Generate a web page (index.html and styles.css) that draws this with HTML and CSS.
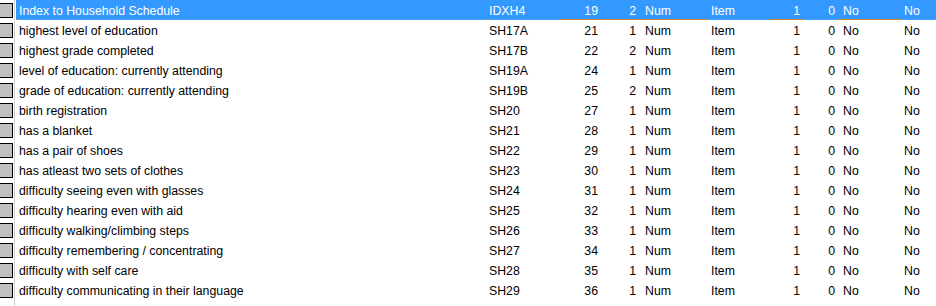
FILE: index.html
```html
<!DOCTYPE html>
<html>
<head>
<meta charset="utf-8">
<link rel="stylesheet" href="styles.css">
</head>
<body>
<div class="list">
  <div class="row sel"><div class="gut"><span class="box"></span></div><div class="c lbl">Index to Household Schedule</div><div class="c nm">IDXH4</div><div class="c st">19</div><div class="c ln">2</div><div class="c ty">Num</div><div class="c ro">Item</div><div class="c oc">1</div><div class="c dc">0</div><div class="c z1">No</div><div class="c z2">No</div></div>
  <div class="row"><div class="gut"><span class="box"></span></div><div class="c lbl">highest level of education</div><div class="c nm">SH17A</div><div class="c st">21</div><div class="c ln">1</div><div class="c ty">Num</div><div class="c ro">Item</div><div class="c oc">1</div><div class="c dc">0</div><div class="c z1">No</div><div class="c z2">No</div></div>
  <div class="row"><div class="gut"><span class="box"></span></div><div class="c lbl">highest grade completed</div><div class="c nm">SH17B</div><div class="c st">22</div><div class="c ln">2</div><div class="c ty">Num</div><div class="c ro">Item</div><div class="c oc">1</div><div class="c dc">0</div><div class="c z1">No</div><div class="c z2">No</div></div>
  <div class="row"><div class="gut"><span class="box"></span></div><div class="c lbl">level of education: currently attending</div><div class="c nm">SH19A</div><div class="c st">24</div><div class="c ln">1</div><div class="c ty">Num</div><div class="c ro">Item</div><div class="c oc">1</div><div class="c dc">0</div><div class="c z1">No</div><div class="c z2">No</div></div>
  <div class="row"><div class="gut"><span class="box"></span></div><div class="c lbl">grade of education: currently attending</div><div class="c nm">SH19B</div><div class="c st">25</div><div class="c ln">2</div><div class="c ty">Num</div><div class="c ro">Item</div><div class="c oc">1</div><div class="c dc">0</div><div class="c z1">No</div><div class="c z2">No</div></div>
  <div class="row"><div class="gut"><span class="box"></span></div><div class="c lbl">birth registration</div><div class="c nm">SH20</div><div class="c st">27</div><div class="c ln">1</div><div class="c ty">Num</div><div class="c ro">Item</div><div class="c oc">1</div><div class="c dc">0</div><div class="c z1">No</div><div class="c z2">No</div></div>
  <div class="row"><div class="gut"><span class="box"></span></div><div class="c lbl">has a blanket</div><div class="c nm">SH21</div><div class="c st">28</div><div class="c ln">1</div><div class="c ty">Num</div><div class="c ro">Item</div><div class="c oc">1</div><div class="c dc">0</div><div class="c z1">No</div><div class="c z2">No</div></div>
  <div class="row"><div class="gut"><span class="box"></span></div><div class="c lbl">has a pair of shoes</div><div class="c nm">SH22</div><div class="c st">29</div><div class="c ln">1</div><div class="c ty">Num</div><div class="c ro">Item</div><div class="c oc">1</div><div class="c dc">0</div><div class="c z1">No</div><div class="c z2">No</div></div>
  <div class="row"><div class="gut"><span class="box"></span></div><div class="c lbl">has atleast two sets of clothes</div><div class="c nm">SH23</div><div class="c st">30</div><div class="c ln">1</div><div class="c ty">Num</div><div class="c ro">Item</div><div class="c oc">1</div><div class="c dc">0</div><div class="c z1">No</div><div class="c z2">No</div></div>
  <div class="row"><div class="gut"><span class="box"></span></div><div class="c lbl">difficulty seeing even with glasses</div><div class="c nm">SH24</div><div class="c st">31</div><div class="c ln">1</div><div class="c ty">Num</div><div class="c ro">Item</div><div class="c oc">1</div><div class="c dc">0</div><div class="c z1">No</div><div class="c z2">No</div></div>
  <div class="row"><div class="gut"><span class="box"></span></div><div class="c lbl">difficulty hearing even with aid</div><div class="c nm">SH25</div><div class="c st">32</div><div class="c ln">1</div><div class="c ty">Num</div><div class="c ro">Item</div><div class="c oc">1</div><div class="c dc">0</div><div class="c z1">No</div><div class="c z2">No</div></div>
  <div class="row"><div class="gut"><span class="box"></span></div><div class="c lbl">difficulty walking/climbing steps</div><div class="c nm">SH26</div><div class="c st">33</div><div class="c ln">1</div><div class="c ty">Num</div><div class="c ro">Item</div><div class="c oc">1</div><div class="c dc">0</div><div class="c z1">No</div><div class="c z2">No</div></div>
  <div class="row"><div class="gut"><span class="box"></span></div><div class="c lbl">difficulty remembering / concentrating</div><div class="c nm">SH27</div><div class="c st">34</div><div class="c ln">1</div><div class="c ty">Num</div><div class="c ro">Item</div><div class="c oc">1</div><div class="c dc">0</div><div class="c z1">No</div><div class="c z2">No</div></div>
  <div class="row"><div class="gut"><span class="box"></span></div><div class="c lbl">difficulty with self care</div><div class="c nm">SH28</div><div class="c st">35</div><div class="c ln">1</div><div class="c ty">Num</div><div class="c ro">Item</div><div class="c oc">1</div><div class="c dc">0</div><div class="c z1">No</div><div class="c z2">No</div></div>
  <div class="row"><div class="gut"><span class="box"></span></div><div class="c lbl">difficulty communicating in their language</div><div class="c nm">SH29</div><div class="c st">36</div><div class="c ln">1</div><div class="c ty">Num</div><div class="c ro">Item</div><div class="c oc">1</div><div class="c dc">0</div><div class="c z1">No</div><div class="c z2">No</div></div>
  <div class="row tail"><div class="gut"></div></div>
</div>
</body>
</html>
```
FILE: styles.css
```css
html, body {
  margin: 0;
  padding: 0;
  background: #ffffff;
}
.list {
  width: 936px;
  height: 306px;
  overflow: hidden;
  font-family: "Liberation Sans", Arial, sans-serif;
  font-size: 12.3px;
  color: #000000;
}
.row {
  display: grid;
  grid-template-columns: 16px 470px 74px 41px 38px 68px 63px 33px 35px 63px 35px;
  height: 20px;
  line-height: 20px;
  box-sizing: border-box;
}
.row.tail {
  height: 6px;
}
.gut {
  border-right: 1px solid #d4d0c8;
  margin-right: 1px;
  position: relative;
  background: #ffffff;
}
.box {
  position: absolute;
  left: -1px;
  top: 3px;
  width: 12px;
  height: 13px;
  background: #c0c0c0;
  border: 1px solid #000000;
}
.c {
  padding: 1px 3px 0 3px;
  height: 20px;
  box-sizing: border-box;
  white-space: nowrap;
  overflow: hidden;
}
.st, .ln, .oc, .dc {
  text-align: right;
}
.ty { padding-left: 6px; }
.ro { padding-left: 4px; }
.z1 { padding-left: 5px; }
.z2 { padding-left: 3px; }
.sel .c {
  background: #3399ff;
  color: #ffffff;
  border-bottom: 1px dotted #d98a2b;
}
```
